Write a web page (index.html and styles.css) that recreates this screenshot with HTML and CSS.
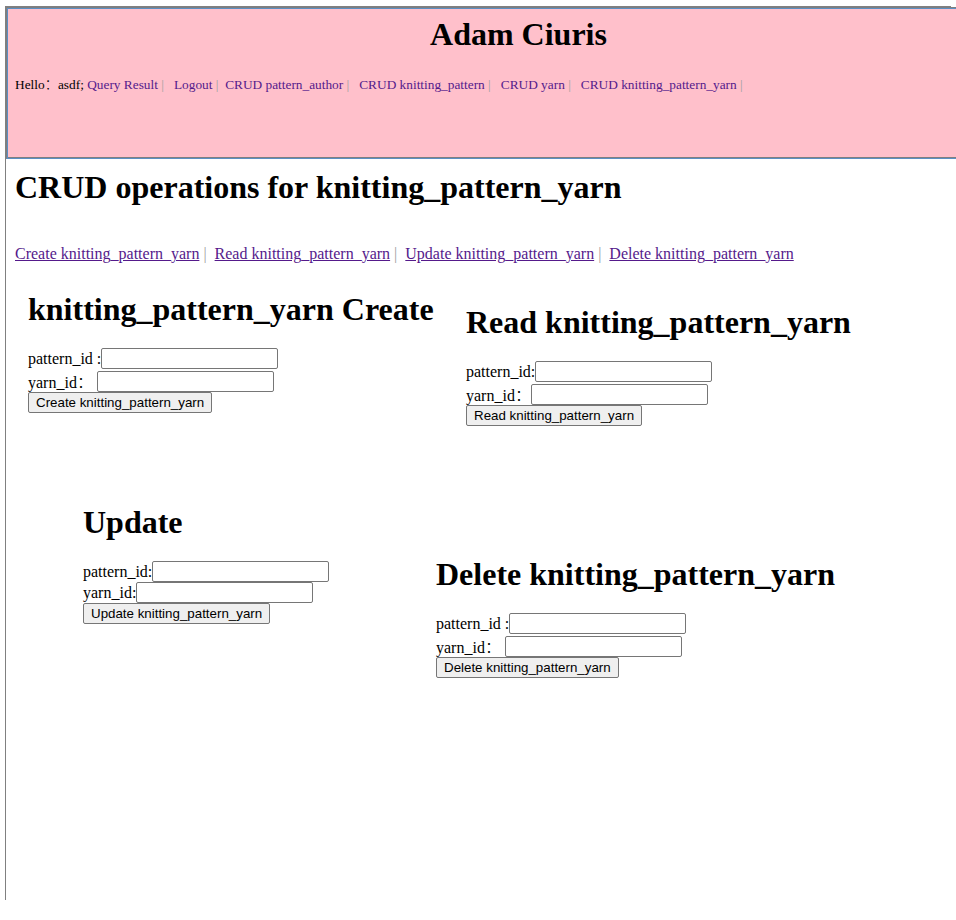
FILE: index.html
```html
<!DOCTYPE html>
<html>
<head>
<meta charset="utf-8">
<title>CRUD knitting_pattern_yarn</title>
<link rel="stylesheet" href="styles.css">
</head>
<body>
<div class="page">
  <div class="header">
    <h1 class="site-title">Adam Ciuris</h1>
    <p class="hello">Hello<span class="cjk">：</span>asdf; <a href="#">Query Result</a> <span class="sep">|</span>&nbsp;&nbsp; <a href="#">Logout</a> <span class="sep">|</span>&nbsp; <a href="#">CRUD pattern_author</a> <span class="sep">|</span>&nbsp;&nbsp; <a href="#">CRUD knitting_pattern</a> <span class="sep">|</span>&nbsp;&nbsp; <a href="#">CRUD yarn</a> <span class="sep">|</span>&nbsp;&nbsp; <a href="#">CRUD knitting_pattern_yarn</a> <span class="sep">|</span></p>
  </div>
  <div class="content">
    <h1 class="page-title">CRUD operations for knitting_pattern_yarn</h1>
    <p class="ops"><a href="#">Create knitting_pattern_yarn</a> <span class="sep">|</span>&nbsp; <a href="#">Read knitting_pattern_yarn</a> <span class="sep">|</span>&nbsp; <a href="#">Update knitting_pattern_yarn</a> <span class="sep">|</span>&nbsp; <a href="#">Delete knitting_pattern_yarn</a></p>

    <div class="forms">
      <form class="box box-create">
        <h1>knitting_pattern_yarn Create</h1>
        <div class="row gap"><span class="lbl">pattern_id :</span><input type="text"></div>
        <div class="row"><span class="lbl">yarn_id<span class="cjk">：</span>&nbsp;</span><input type="text"></div>
        <button type="button">Create knitting_pattern_yarn</button>
      </form>

      <form class="box box-read">
        <h1>Read knitting_pattern_yarn</h1>
        <div class="row gap"><span class="lbl">pattern_id:</span><input type="text"></div>
        <div class="row"><span class="lbl">yarn_id<span class="cjk">：</span></span><input type="text"></div>
        <button type="button">Read knitting_pattern_yarn</button>
      </form>

      <form class="box box-update">
        <h1>Update</h1>
        <div class="row"><span class="lbl">pattern_id:</span><input type="text"></div>
        <div class="row"><span class="lbl">yarn_id:</span><input type="text"></div>
        <button type="button">Update knitting_pattern_yarn</button>
      </form>

      <form class="box box-delete">
        <h1>Delete knitting_pattern_yarn</h1>
        <div class="row gap"><span class="lbl">pattern_id :</span><input type="text"></div>
        <div class="row"><span class="lbl">yarn_id<span class="cjk">：</span>&nbsp;</span><input type="text"></div>
        <button type="button">Delete knitting_pattern_yarn</button>
      </form>
    </div>
  </div>
</div>
</body>
</html>
```

FILE: styles.css
```css
body {
  margin: 6px 0 0 5px;
  font-family: "Liberation Serif", "Times New Roman", serif;
  color: #000;
  background: #fff;
}

.cjk {
  font-family: "Noto Sans CJK SC", sans-serif;
  font-weight: 300;
}

.page {
  box-sizing: border-box;
  width: 946px;
  height: 894px;
  border-top: 1px solid #808080;
  border-left: 1px solid #808080;
}

.header {
  box-sizing: border-box;
  width: 950px;
  height: 152px;
  background: #ffc0cb;
  border-top: 1px solid #7f7f7f;
  border-left: 1px solid #7f7f7f;
  border-bottom: 1px solid #5b8fc4;
  box-shadow: inset 0 1px 0 #5b8fc4, inset 1px 0 0 #5b8fc4, inset 0 -1px 0 #7f7f7f;
  padding: 8px 0 0 8px;
}

.site-title {
  margin: 0 0 0 66px;
  font-size: 32px;
  line-height: 37px;
  text-align: center;
}

.hello {
  margin: 23px 0 0;
  font-size: 13.333px;
  line-height: 15px;
  white-space: nowrap;
}

.hello a {
  color: #551a8b;
  text-decoration: none;
}

.sep {
  color: #a0a0a0;
}

.content {
  padding-left: 9px;
}

.page-title {
  margin: 10px 0 0;
  font-size: 32px;
  line-height: 37px;
}

.ops {
  margin: 39px 0 0;
  font-size: 16px;
  line-height: 18px;
  white-space: nowrap;
}

.ops a {
  color: #551a8b;
}

.forms {
  display: grid;
  grid-template-columns: 421px 1fr;
  align-items: start;
}

.box {
  margin: 0;
}

.box h1 {
  margin: 0 0 20px;
  font-size: 32px;
  line-height: 37px;
  white-space: nowrap;
}

.box-create {
  margin: 28px 0 0 13px;
}

.box-read {
  margin: 41px 0 0 30px;
}

.box-update {
  margin: 78px 0 0 68px;
}

.box-delete {
  margin: 130px 0 0 0;
}

.row {
  display: flex;
  align-items: center;
  height: 21px;
}

.row.gap {
  margin-bottom: 2px;
}

.lbl {
  font-size: 16px;
  line-height: 18px;
  white-space: nowrap;
}

input {
  box-sizing: border-box;
  width: 177px;
  height: 21px;
  margin: 0;
  padding: 1px 2px;
  border: 1px solid #767676;
  border-radius: 2px;
  background: #fff;
  font-family: "Liberation Sans", Arial, sans-serif;
  font-size: 13.333px;
}

button {
  display: block;
  box-sizing: border-box;
  height: 21px;
  margin: 0;
  padding: 1px 7px;
  border: 1px solid #767676;
  border-radius: 2px;
  background: #efefef;
  color: #000;
  font-family: "Liberation Sans", Arial, sans-serif;
  font-size: 13.333px;
  line-height: 15px;
}
```
